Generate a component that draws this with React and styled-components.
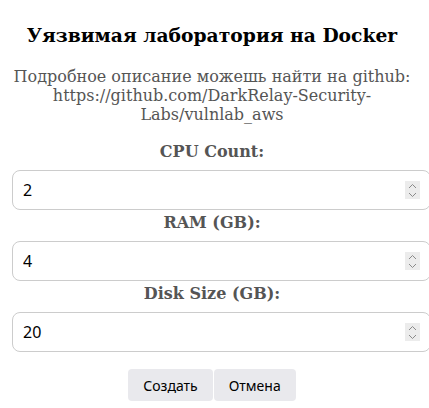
import React, { useState } from 'react'
import styled, { createGlobalStyle } from 'styled-components'

const GlobalStyle = createGlobalStyle`
    body {
        margin: 0;
        background: #ffffff;
    }
`

const fields = [
    { id: 'cpu', label: 'CPU Count:', value: '2' },
    { id: 'ram', label: 'RAM (GB):', value: '4' },
    { id: 'disk', label: 'Disk Size (GB):', value: '20' },
]

function App() {
    const [values, setValues] = useState(
        Object.fromEntries(fields.map((f) => [f.id, f.value]))
    )

    const step = (id, delta) => {
        const next = Math.max(0, Number(values[id] || 0) + delta)
        setValues({ ...values, [id]: String(next) })
    }

    return (
        <>
            <GlobalStyle />
            <Dialog>
                <Title>Уязвимая лаборатория на Docker</Title>
                <Description>
                    Подробное описание можешь найти на github: https://github.com/DarkRelay-Security-Labs/vulnlab_aws
                </Description>
                <Form onSubmit={(e) => e.preventDefault()}>
                    {fields.map((field) => (
                        <Field key={field.id}>
                            <Label htmlFor={field.id}>{field.label}</Label>
                            <InputWrap>
                                <NumberInput
                                    id={field.id}
                                    type="number"
                                    value={values[field.id]}
                                    onChange={(e) => setValues({ ...values, [field.id]: e.target.value })}
                                />
                                <Spinner>
                                    <SpinButton type="button" tabIndex={-1} onClick={() => step(field.id, 1)}>
                                        <svg width="9" height="6" viewBox="0 0 9 6">
                                            <path d="M1 5 L4.5 1.5 L8 5" fill="none" stroke="#8a8a8a" strokeWidth="1" />
                                        </svg>
                                    </SpinButton>
                                    <SpinButton type="button" tabIndex={-1} onClick={() => step(field.id, -1)}>
                                        <svg width="9" height="6" viewBox="0 0 9 6">
                                            <path d="M1 1 L4.5 4.5 L8 1" fill="none" stroke="#8a8a8a" strokeWidth="1" />
                                        </svg>
                                    </SpinButton>
                                </Spinner>
                            </InputWrap>
                        </Field>
                    ))}
                    <Actions>
                        <Button type="submit">Создать</Button>
                        <Button type="button">Отмена</Button>
                    </Actions>
                </Form>
            </Dialog>
        </>
    )
}

const Dialog = styled.div`
    width: 429px;
    padding: 24px 17px 0 12px;
    box-sizing: border-box;
    text-align: center;
    font-family: 'DejaVu Serif', serif;
`

const Title = styled.h3`
    margin: 0;
    font-size: 18.72px;
    font-weight: 700;
    line-height: normal;
    color: #000000;
`

const Description = styled.p`
    margin: 21px 0 0;
    font-size: 16px;
    line-height: normal;
    color: #555555;
`

const Form = styled.form`
    display: flex;
    flex-direction: column;
    margin-top: 18px;
`

const Field = styled.div`
    display: flex;
    flex-direction: column;
    align-items: center;
`

const Label = styled.label`
    font-size: 16px;
    font-weight: 700;
    line-height: 19px;
    color: #555555;
    margin-bottom: 9px;
`

const InputWrap = styled.div`
    position: relative;
    align-self: flex-start;
    width: 419px;
    margin: 0 0 3px;
`

const NumberInput = styled.input`
    box-sizing: border-box;
    display: block;
    width: 100%;
    height: 40px;
    padding: 0 10px;
    border: 1px solid #cccccc;
    border-radius: 8px;
    font-family: 'Noto Sans', sans-serif;
    font-size: 16px;
    color: #000000;
    background: #ffffff;
    outline: none;
    -moz-appearance: textfield;

    &::-webkit-inner-spin-button,
    &::-webkit-outer-spin-button {
        -webkit-appearance: none;
        margin: 0;
    }
`

const Spinner = styled.div`
    position: absolute;
    top: 11px;
    right: 11px;
    width: 15px;
    height: 18px;
    display: flex;
    flex-direction: column;
    background: #ececec;
`

const SpinButton = styled.button`
    flex: 1;
    display: flex;
    align-items: center;
    justify-content: center;
    padding: 0;
    border: 0;
    background: transparent;
    cursor: pointer;
`

const Actions = styled.div`
    display: flex;
    justify-content: center;
    gap: 1px;
    margin-top: 14px;
`

const Button = styled.button`
    height: 32px;
    padding: 0 15px;
    border: 0;
    border-radius: 4px;
    background: #e9e9ed;
    font-family: 'Noto Sans', sans-serif;
    font-size: 14px;
    color: #000000;
    cursor: pointer;
`

export default App
